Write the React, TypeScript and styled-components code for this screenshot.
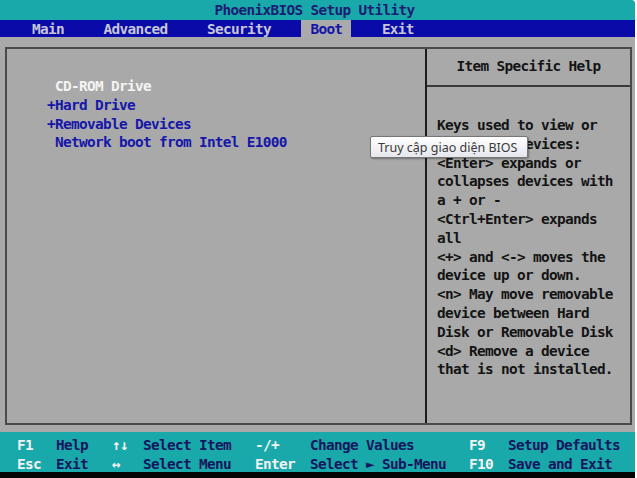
import React from "react";
import styled, { createGlobalStyle } from "styled-components";

const GlobalStyle = createGlobalStyle`
  html, body { margin: 0; padding: 0; background: #ffffff; }
  * { box-sizing: border-box; }
`;

const CYAN = "#19a9aa";
const BLUE = "#0a0aa8";
const GRAY = "#a9a9a9";
const NAVY = "#16165e";

const Screen = styled.div`
  position: relative;
  width: 635px;
  height: 478px;
  display: flex;
  flex-direction: column;
  background: ${GRAY};
  font-family: "DejaVu Sans Mono", "Liberation Mono", monospace;
  font-size: 14.4px;
  font-weight: bold;
  letter-spacing: -0.67px;
  overflow: hidden;
  border-top-right-radius: 4px;
`;

const TitleBar = styled.div`
  height: 20px;
  background: ${CYAN};
  color: #1c1c72;
  display: flex;
  align-items: center;
  justify-content: center;
  padding-right: 6px;
  white-space: pre;
`;

const MenuBar = styled.div`
  height: 17px;
  background: ${BLUE};
  display: flex;
  align-items: stretch;
  gap: 21.5px;
  padding-left: 23px;
`;

const Tab = styled.div<{ $active?: boolean }>`
  padding: 1px 9px 0;
  display: flex;
  align-items: center;
  background: ${(p) => (p.$active ? "#aaaaaa" : "transparent")};
  color: ${(p) => (p.$active ? "#1414a8" : "#c6c6d8")};
`;

const Body = styled.div`
  flex: 1;
  padding: 10px 3px 7px 5px;
  display: flex;
`;

const Box = styled.div`
  flex: 1;
  display: flex;
  border: 2px solid #4a4a4a;
`;

const LeftPane = styled.div`
  flex: 1;
  padding: 28px 0 0 40px;
  border-right: 2px solid #1c1c1c;
`;

const Line = styled.div<{ $color?: string }>`
  height: 18.8px;
  line-height: 18.8px;
  white-space: pre;
  color: ${(p) => p.$color || "#141414"};
`;

const HelpPane = styled.div`
  width: 203px;
  display: flex;
  flex-direction: column;
`;

const HelpHeader = styled.div`
  height: 38px;
  border-bottom: 2px solid #3a3a3a;
  display: flex;
  align-items: center;
  justify-content: center;
  color: #141414;
  padding-bottom: 2px;
`;

const HelpText = styled.div`
  padding: 29px 0 0 10px;
`;

const Footer = styled.div`
  height: 40px;
  background: ${CYAN};
  display: grid;
  grid-template-columns: 39px 56px 31px 112px 55px 159px 39px auto;
  grid-template-rows: 19px 19px;
  padding: 3px 0 0 17px;
  align-items: center;
`;

const FKey = styled.span`
  color: #f2f2f2;
  white-space: pre;
`;

const FDesc = styled.span`
  color: ${NAVY};
  white-space: pre;
`;

const BottomStrip = styled.div`
  height: 6px;
  background: #050505;
`;

const Tooltip = styled.div`
  position: absolute;
  left: 370px;
  top: 136px;
  width: 158px;
  height: 22px;
  padding: 0 7px;
  display: flex;
  align-items: center;
  background: linear-gradient(#ffffff, #e6e7ee);
  border: 1px solid #767676;
  border-radius: 2px;
  box-shadow: 1px 1px 2px rgba(0, 0, 0, 0.35);
  font-family: "Noto Sans", "Open Sans", sans-serif;
  font-weight: normal;
  font-size: 12.5px;
  letter-spacing: 0;
  color: #3a3a3a;
  white-space: nowrap;
`;

const tabs = ["Main", "Advanced", "Security", "Boot", "Exit"];

const bootItems: { text: string; color: string }[] = [
  { text: " CD-ROM Drive", color: "#f4f4f4" },
  { text: "+Hard Drive", color: "#1616aa" },
  { text: "+Removable Devices", color: "#1616aa" },
  { text: " Network boot from Intel E1000", color: "#1616aa" },
];

const helpLines = [
  "Keys used to view or",
  "configure devices:",
  "<Enter> expands or",
  "collapses devices with",
  "a + or -",
  "<Ctrl+Enter> expands",
  "all",
  "<+> and <-> moves the",
  "device up or down.",
  "<n> May move removable",
  "device between Hard",
  "Disk or Removable Disk",
  "<d> Remove a device",
  "that is not installed.",
];

const footerRows = [
  ["F1", "Help", "↑↓", "Select Item", "-/+", "Change Values", "F9", "Setup Defaults"],
  ["Esc", "Exit", "↔", "Select Menu", "Enter", "Select ► Sub-Menu", "F10", "Save and Exit"],
];

export default function App() {
  return (
    <>
      <GlobalStyle />
      <Screen>
        <TitleBar>PhoenixBIOS Setup Utility</TitleBar>
        <MenuBar>
          {tabs.map((t) => (
            <Tab key={t} $active={t === "Boot"}>
              {t}
            </Tab>
          ))}
        </MenuBar>
        <Body>
          <Box>
            <LeftPane>
              {bootItems.map((it) => (
                <Line key={it.text} $color={it.color}>
                  {it.text}
                </Line>
              ))}
            </LeftPane>
            <HelpPane>
              <HelpHeader>Item Specific Help</HelpHeader>
              <HelpText>
                {helpLines.map((l) => (
                  <Line key={l}>{l}</Line>
                ))}
              </HelpText>
            </HelpPane>
          </Box>
        </Body>
        <Footer>
          {footerRows.map((row, r) =>
            row.map((cell, i) =>
              i % 2 === 0 ? (
                <FKey key={`${r}-${i}`}>{cell}</FKey>
              ) : (
                <FDesc key={`${r}-${i}`}>{cell}</FDesc>
              )
            )
          )}
        </Footer>
        <BottomStrip />
        <Tooltip>Truy cập giao diện BIOS</Tooltip>
      </Screen>
    </>
  );
}
